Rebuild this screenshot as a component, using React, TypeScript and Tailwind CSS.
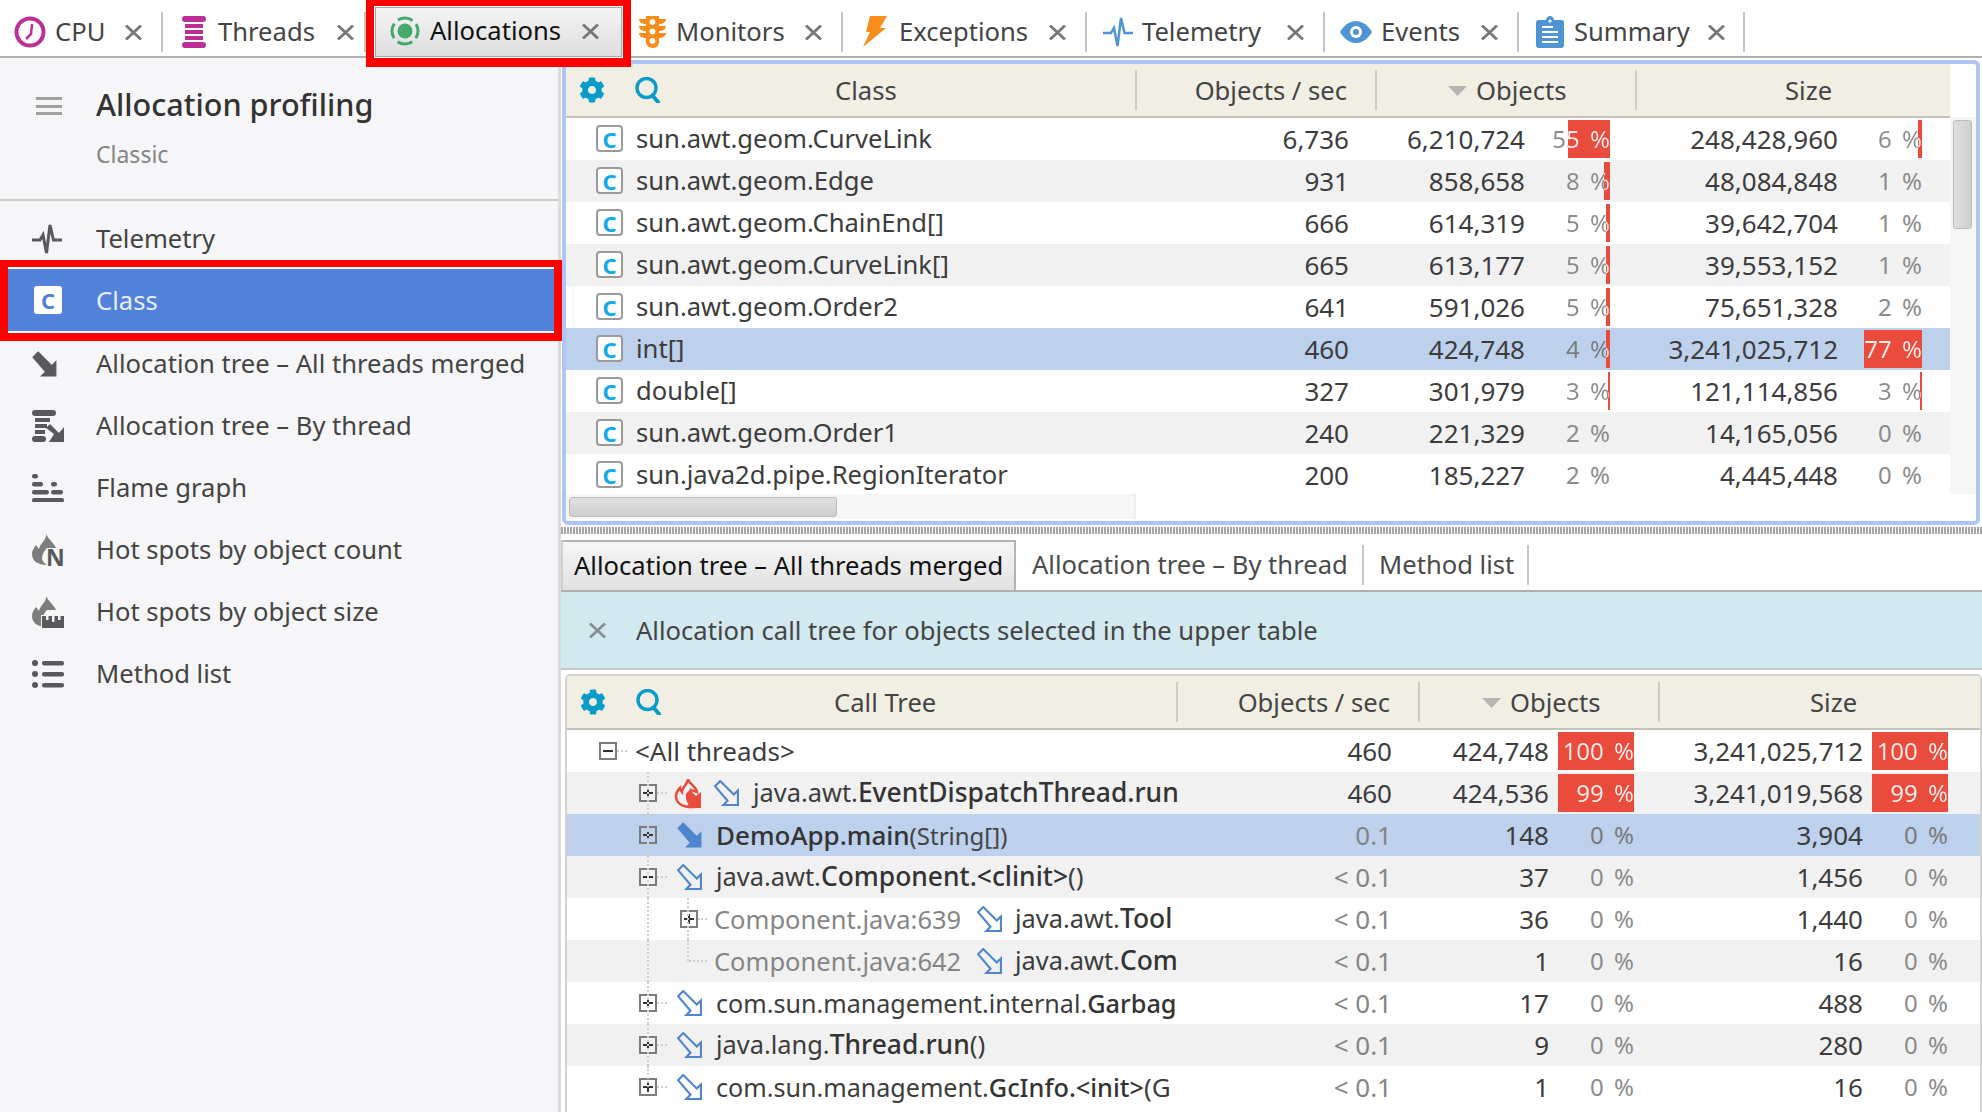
import { ReactNode } from 'react';
import { FaCog } from 'react-icons/fa';

const TEAL = '#0a9cc9';
const GREY = '#58595b';

function ClockIcon() {
  return (
    <svg width="32" height="32" viewBox="0 0 32 32" fill="none">
      <circle cx="16" cy="16" r="13.5" stroke="#bc2f97" strokeWidth="4" />
      <path d="M18 8 L17 18 L12 23" stroke="#bc2f97" strokeWidth="2.5" />
    </svg>
  );
}

function ThreadsIcon() {
  return (
    <svg width="24" height="32" viewBox="0 0 24 32" fill="#bc2f97">
      <rect x="0" y="0" width="24" height="6" rx="3" />
      <rect x="3" y="8" width="18" height="4" />
      <rect x="3" y="14" width="18" height="4" />
      <rect x="3" y="20" width="18" height="4" />
      <rect x="0" y="26" width="24" height="6" rx="3" />
    </svg>
  );
}

function AllocIcon() {
  return (
    <svg width="30" height="30" viewBox="0 0 30 30" fill="none">
      <circle cx="15" cy="15" r="7.5" fill="#46a86b" />
      <circle cx="15" cy="15" r="13" stroke="#46a86b" strokeWidth="3" strokeDasharray="15.4 5" strokeDashoffset="7.7" />
    </svg>
  );
}

function TrafficIcon() {
  return (
    <svg width="27" height="32" viewBox="0 0 27 32">
      <path
        fill="#f98d1a"
        fillRule="evenodd"
        d="M7 0h13v3h7c0 3-3 5-7 5v2h7c0 3-3 5-7 5v2h7c0 3-3 5-7 5v4c0 3-2 6-6 6s-7-3-7-6v-4c-4 0-7-2-7-5h7v-2c-4 0-7-2-7-5h7V8C3 8 0 6 0 3h7z M13.500 3a3 3 0 1 0 .01 0z M13.500 12.500a3 3 0 1 0 .01 0z M13.500 22a3 3 0 1 0 .01 0z"
      />
    </svg>
  );
}

function BoltIcon() {
  return (
    <svg width="24" height="32" viewBox="0 0 24 32">
      <path fill="#f98d1a" d="M7 0h17l-7 12h6L0 31l7-15H3z" />
    </svg>
  );
}

function PulseIcon({ color, width = 2.500 }: { color: string; width?: number }) {
  return (
    <svg width="30" height="30" viewBox="0 0 30 30" fill="none">
      <path d="M0 16h8l3-5 3.500 18L18 1l3.500 15H30" stroke={color} strokeWidth={width} />
    </svg>
  );
}

function EyeIcon() {
  return (
    <svg width="32" height="24" viewBox="0 0 32 24">
      <path fill="#4f94d4" d="M16 1c7 0 12.500 5 16 11-3.500 6-9 11-16 11S3.500 18 0 12C3.500 6 9 1 16 1z" />
      <circle cx="16" cy="12" r="6" fill="#fff" />
      <circle cx="16" cy="12" r="3" fill="#4f94d4" />
    </svg>
  );
}

function ClipboardIcon() {
  return (
    <svg width="28" height="32" viewBox="0 0 28 32">
      <path fill="#4f94d4" d="M3 4h7c0-2 2-4 4-4s4 2 4 4h7c2 0 3 1 3 3v22c0 2-1 3-3 3H3c-2 0-3-1-3-3V7c0-2 1-3 3-3z" />
      <path stroke="#fff" strokeWidth="2" d="M6 11h11M6 16h16M6 21h16M6 26h16" />
      <circle cx="14" cy="5" r="1.500" fill="#fff" />
    </svg>
  );
}

function CloseX({ light }: { light?: boolean }) {
  return (
    <svg width="17" height="15" viewBox="0 0 17 15" fill="none">
      <path d="M1 .5 16 14.500M16 .5 1 14.500" stroke={light ? '#8a8f92' : '#777'} strokeWidth="2.800" />
    </svg>
  );
}

function Tab({ icon, label, className, iconBox, labelBox }: { icon: ReactNode; label: string; className: string; iconBox: string; labelBox: string }) {
  return (
    <div className={'flex h-[56px] shrink-0 items-center pt-[8px] ' + className}>
      <div className={'flex shrink-0 items-center ' + iconBox}>{icon}</div>
      <div className={'shrink-0 whitespace-nowrap text-[#444] ' + labelBox}>{label}</div>
      <CloseX />
      <div className="ml-auto h-[40px] w-[2px] bg-[#c4c4c4]" />
    </div>
  );
}

function TabBar() {
  return (
    <div className="flex h-[58px] shrink-0 border-b-2 border-[#b0b0b0] bg-white text-[25.600px]">
      <Tab icon={<ClockIcon />} label="CPU" className="w-[163px] pl-[14px]" iconBox="w-[41px]" labelBox="w-[70px]" />
      <Tab icon={<ThreadsIcon />} label="Threads" className="w-[203px] pl-[19px]" iconBox="w-[36px]" labelBox="w-[119px]" />
      <div className="relative z-10 h-[67px] w-[265px] shrink-0 border-x-[8px] border-t-[6px] border-b-[9px] border-[#f00]">
        <div className="h-full border border-white">
          <div className="flex h-full items-center border border-[#aaa] bg-gradient-to-b from-[#f4f4f4] to-[#dedede] pb-[2px] pl-[14px]">
            <div className="flex w-[40px] shrink-0 items-center"><AllocIcon /></div>
            <div className="w-[152px] shrink-0 whitespace-nowrap text-[#111]">Allocations</div>
            <CloseX />
          </div>
        </div>
      </div>
      <Tab icon={<TrafficIcon />} label="Monitors" className="w-[212px] pl-[8px]" iconBox="w-[37px]" labelBox="w-[129px]" />
      <Tab icon={<BoltIcon />} label="Exceptions" className="w-[244px] pl-[20px]" iconBox="w-[36px]" labelBox="w-[150px]" />
      <Tab icon={<PulseIcon color="#4f94d4" />} label="Telemetry" className="w-[238px] pl-[16px]" iconBox="w-[39px]" labelBox="w-[145px]" />
      <Tab icon={<EyeIcon />} label="Events" className="w-[194px] pl-[15px]" iconBox="w-[41px]" labelBox="w-[100px]" />
      <Tab icon={<ClipboardIcon />} label="Summary" className="w-[226px] pl-[17px]" iconBox="w-[38px]" labelBox="w-[134px]" />
    </div>
  );
}

function TreeArrow({ filled, color = '#4f85cc', size = 26 }: { filled?: boolean; color?: string; size?: number }) {
  return (
    <svg width={size} height={size} viewBox="0 0 25 25">
      <path
        d="M1 6 6 1 19 14l4-4v14H9l4-4z"
        fill={filled ? color : 'none'}
        stroke={color}
        strokeWidth={filled ? 1 : 2}
      />
    </svg>
  );
}

function SideThreadsIcon() {
  return (
    <svg width="32" height="32" viewBox="0 0 32 32" fill={GREY}>
      <rect x="0" y="0" width="24" height="6" rx="3" />
      <rect x="3" y="8" width="15" height="4" />
      <rect x="3" y="14" width="12" height="4" />
      <rect x="3" y="20" width="10" height="4" />
      <rect x="0" y="26" width="14" height="6" rx="3" />
      <path d="M18 14 14 18l8 6-5 8h15V17l-5 6z" />
    </svg>
  );
}

function FlameGraphIcon() {
  return (
    <svg width="32" height="28" viewBox="0 0 32 28" fill={GREY}>
      <rect x="0" y="0" width="6" height="4.500" rx="2.200" />
      <rect x="0" y="8" width="11" height="4.500" rx="2.200" />
      <rect x="19" y="8" width="6" height="4.500" rx="2.200" />
      <rect x="0" y="16" width="17" height="4.500" rx="2.200" />
      <rect x="19" y="16" width="12" height="4.500" rx="2.200" />
      <rect x="0" y="24" width="32" height="4.500" rx="2.200" />
    </svg>
  );
}

function HotSpotIcon({ kind }: { kind: 'count' | 'size' }) {
  return (
    <svg width="36" height="48" viewBox="0 -8 36 48">
      <path
        fill="#7d7d7d"
        d="M14 0c2 5 8 9 10 14h-9c-3 3-5 7-5 10 0 3 2 5 5 7C6 31 0 27 0 20c0-4 2-6 4-9l3 4c1-6 8-9 7-15z"
      />
      {kind === 'count' ? (
        <text x="14" y="32" fontSize="23" fontWeight="700" fill={GREY}>N</text>
      ) : (
        <g>
          <rect x="9" y="19" width="24" height="13" fill="#f6f6f9" />
          <rect x="10" y="20" width="22" height="12" fill={GREY} />
          <rect x="14" y="20" width="2.500" height="4" fill="#f6f6f9" />
          <rect x="20" y="20" width="2.500" height="6" fill="#f6f6f9" />
          <rect x="26" y="20" width="2.500" height="4" fill="#f6f6f9" />
        </g>
      )}
    </svg>
  );
}

function MethodListIcon() {
  return (
    <svg width="32" height="28" viewBox="0 0 32 28" fill={GREY}>
      <circle cx="3" cy="3" r="3" />
      <circle cx="3" cy="14" r="3" />
      <circle cx="3" cy="25" r="3" />
      <rect x="10" y="1" width="22" height="4.500" rx="2" />
      <rect x="10" y="12" width="22" height="4.500" rx="2" />
      <rect x="10" y="23" width="22" height="4.500" rx="2" />
    </svg>
  );
}

function SideRow({ icon, label }: { icon: ReactNode; label: string }) {
  return (
    <div className="flex h-[62px] items-center">
      <div className="flex w-[96px] shrink-0 justify-start pl-[32px]">{icon}</div>
      <span className="whitespace-nowrap text-[25.600px] text-[#444]">{label}</span>
    </div>
  );
}

function Sidebar() {
  return (
    <aside className="w-[561px] shrink-0 border-r-[3px] border-[#dcdcde] bg-[#f6f6f9]">
      <div className="flex h-[143px] border-b-2 border-[#cfcfcf]">
        <div className="ml-[36px] mt-[39px] flex h-[18px] w-[26px] flex-col justify-between">
          <div className="h-[3px] bg-[#a0a0a0]" />
          <div className="h-[3px] bg-[#a0a0a0]" />
          <div className="h-[3px] bg-[#a0a0a0]" />
        </div>
        <div className="ml-[34px]">
          <div className="mt-[23px] whitespace-nowrap text-[30.600px] font-medium leading-[46px] text-[#333]">Allocation profiling</div>
          <div className="mt-[10px] text-[23px] leading-[34px] text-[#858585]">Classic</div>
        </div>
      </div>
      <div className="pt-[7px]">
        <SideRow icon={<PulseIcon color={GREY} width={3} />} label="Telemetry" />
        <div className="relative z-10 -mt-[10px] -mb-[8px] h-[81px] w-[562px] border-x-[8px] border-t-[7px] border-b-[8px] border-[#f00]">
          <div className="flex h-full items-center border-y-2 border-white bg-[#5181d8]">
            <div className="flex w-[88px] shrink-0 pl-[26px]">
              <div className="flex h-[28px] w-[28px] items-center justify-center rounded-[3px] bg-white text-[22px] font-bold leading-none text-[#5181d8]">C</div>
            </div>
            <span className="pt-[2px] text-[25.600px] text-[#e6eefb]">Class</span>
          </div>
        </div>
        <SideRow icon={<TreeArrow filled color={GREY} />} label="Allocation tree – All threads merged" />
        <SideRow icon={<SideThreadsIcon />} label="Allocation tree – By thread" />
        <SideRow icon={<FlameGraphIcon />} label="Flame graph" />
        <SideRow icon={<HotSpotIcon kind="count" />} label="Hot spots by object count" />
        <SideRow icon={<HotSpotIcon kind="size" />} label="Hot spots by object size" />
        <SideRow icon={<MethodListIcon />} label="Method list" />
      </div>
    </aside>
  );
}

function SearchIcon() {
  return (
    <svg width="26" height="26" viewBox="0 0 26 26" fill="none">
      <circle cx="11.500" cy="11" r="9.500" stroke={TEAL} strokeWidth="3.400" />
      <path d="M17.500 18.500 23 25" stroke={TEAL} strokeWidth="4" strokeLinecap="round" />
    </svg>
  );
}

function SortArrow() {
  return (
    <svg width="19" height="10" viewBox="0 0 19 10">
      <path d="M0 0h19l-9.500 10z" fill="#b5b5b5" />
    </svg>
  );
}

function HeaderTools() {
  return (
    <div className="ml-[13px] flex shrink-0 items-center gap-[30px]">
      <FaCog size={26} color={TEAL} />
      <SearchIcon />
    </div>
  );
}

function Sep() {
  return <div className="h-[40px] w-[2px] shrink-0 bg-[#cfcdc4]" />;
}

// the part of the text over the bar turns white, the rest stays grey
function Percent({ value, bar, selected }: { value: string; bar?: number; selected?: boolean }) {
  const grey = selected ? '#7a7a7a' : '#8b8b8b';
  return (
    <div className="relative flex h-full items-center justify-end">
      {bar ? <div className="absolute top-[2px] right-0 bottom-[2px] bg-[#e94b3c]" style={{ width: bar }} /> : null}
      <span
        className="relative whitespace-nowrap pb-[1px] text-[24px] text-[#8b8b8b] [word-spacing:4px]"
        style={
          bar
            ? {
                backgroundImage: `linear-gradient(to left, #ffeeeb ${bar}px, ${grey} ${bar}px)`,
                WebkitBackgroundClip: 'text',
                backgroundClip: 'text',
                color: 'transparent',
              }
            : { color: grey }
        }
      >
        {value}
      </span>
    </div>
  );
}

const classRows: [string, string, string, string, number, string, string, number][] = [
  ['sun.awt.geom.CurveLink', '6,736', '6,210,724', '55 %', 42, '248,428,960', '6 %', 4],
  ['sun.awt.geom.Edge', '931', '858,658', '8 %', 6, '48,084,848', '1 %', 0],
  ['sun.awt.geom.ChainEnd[]', '666', '614,319', '5 %', 4, '39,642,704', '1 %', 0],
  ['sun.awt.geom.CurveLink[]', '665', '613,177', '5 %', 4, '39,553,152', '1 %', 0],
  ['sun.awt.geom.Order2', '641', '591,026', '5 %', 4, '75,651,328', '2 %', 0],
  ['int[]', '460', '424,748', '4 %', 4, '3,241,025,712', '77 %', 58],
  ['double[]', '327', '301,979', '3 %', 2, '121,114,856', '3 %', 2],
  ['sun.awt.geom.Order1', '240', '221,329', '2 %', 0, '14,165,056', '0 %', 0],
  ['sun.java2d.pipe.RegionIterator', '200', '185,227', '2 %', 0, '4,445,448', '0 %', 0],
];

function ClassBadge() {
  return (
    <div className="flex h-[27px] w-[27px] items-center justify-center rounded-[4px] border-2 border-[#9a9a9a] bg-white text-[22px] font-bold leading-none text-[#11a9ed]">
      C
    </div>
  );
}

function UpperTable() {
  return (
    <div className="ml-px mr-[2px] mt-[2px] flex h-[465px] shrink-0 overflow-hidden rounded-[6px] border-4 border-[#afc6f5] bg-white">
      <div className="w-[1384px] shrink-0">
        <div className="flex h-[54px] items-center border-b-2 border-[#c2c1ba] bg-[#f1efe4] text-[25.600px] text-[#444]">
          <HeaderTools />
          <div className="ml-[174px] w-[300px] shrink-0 pt-[2px]">Class</div>
          <Sep />
          <div className="flex w-[238px] shrink-0 justify-end pr-[28px] pt-[2px]">Objects / sec</div>
          <Sep />
          <div className="flex w-[258px] shrink-0 items-center gap-[9px] pl-[71px] pt-[2px]"><SortArrow />Objects</div>
          <Sep />
          <div className="pl-[148px] pt-[2px]">Size</div>
        </div>
        <div className="h-[376px] overflow-hidden">
          {classRows.map((r, i) => (
            <div
              key={r[0]}
              className={
                'grid h-[42px] grid-cols-[570px_213px_176px_85px_228px_84px_28px] items-center text-[26px] text-[#3c3c3c] ' +
                (i === 5 ? 'bg-[#bdd0ec]' : i % 2 === 1 ? 'bg-[#f1f1f1]' : 'bg-white')
              }
            >
              <div className="flex items-center pl-[30px]">
                <ClassBadge />
                <span className="ml-[13px] whitespace-nowrap text-[25.600px]">{r[0]}</span>
              </div>
              <div className="text-right">{r[1]}</div>
              <div className="text-right">{r[2]}</div>
              <Percent value={r[3]} bar={r[4]} selected={i === 5} />
              <div className="text-right">{r[5]}</div>
              <Percent value={r[6]} bar={r[7]} selected={i === 5} />
              <div />
            </div>
          ))}
        </div>
        <div className="flex h-[25px] w-[570px] items-center border-r-2 border-[#eee] bg-[#f6f6f6] pl-[3px]">
          <div className="h-[20px] w-[268px] rounded-[3px] border border-[#bbb] bg-gradient-to-b from-[#e0e0e0] to-[#cfcfcf]" />
        </div>
      </div>
      <div className="mt-[53px] h-[377px] w-[26px] bg-[#f6f6f6] px-[3px] pt-[3px]">
        <div className="h-[109px] w-[19px] rounded-[3px] border border-[#bbb] bg-gradient-to-r from-[#e0e0e0] to-[#cfcfcf]" />
      </div>
    </div>
  );
}

function SubTabs() {
  return (
    <div className="flex h-[58px] shrink-0 items-center border-b-2 border-[#b0b0b0] bg-white pt-[6px] text-[25.600px] text-[#4a4a4a]">
      <div className="flex h-[50px] w-[455px] shrink-0 items-center self-end whitespace-nowrap border-x-2 border-t-2 border-[#b4b4b4] border-l-[#d0d0d0] bg-gradient-to-b from-[#f6f6f6] to-[#e1e1e1] pl-[11px] text-[#111]">
        Allocation tree – All threads merged
      </div>
      <div className="ml-[16px] w-[330px] shrink-0 whitespace-nowrap">Allocation tree – By thread</div>
      <div className="h-[40px] w-[2px] shrink-0 bg-[#c8c8c8]" />
      <div className="ml-[15px] w-[148px] shrink-0 whitespace-nowrap">Method list</div>
      <div className="h-[40px] w-[2px] shrink-0 bg-[#c8c8c8]" />
    </div>
  );
}

function ExpandBox({ open }: { open?: boolean }) {
  return (
    <svg width="18" height="18" viewBox="0 0 18 18" className="shrink-0">
      <rect x="1" y="1" width="16" height="16" fill="none" stroke="#7c7c7c" strokeWidth="2" />
      <path d={open ? 'M4 9h10' : 'M4 9h10M9 4v10'} stroke="#333" strokeWidth="2" />
    </svg>
  );
}

function FlameArrowIcon() {
  return (
    <svg width="28" height="32" viewBox="0 0 28 32" className="shrink-0">
      <path
        fill="none"
        stroke="#e94b3c"
        strokeWidth="2.500"
        d="M14 2c0 4 8 7 9 13-2-1-4-1-6-2 0 2-3 3-4 5 0 3 1 8 5 12C8 30 2 26 2 19c0-4 2-6 4-8 0 2 1 3 2 4 0-5 6-8 6-13z"
      />
      <path fill="#e94b3c" d="M12 17l4-4 6 6 5-4v16H12l4-5z" />
    </svg>
  );
}

function VGuide({ className }: { className: string }) {
  return <div className={'absolute w-0 border-l-2 border-dotted border-[#cfcfcf] ' + className} />;
}

function HGuide({ className }: { className: string }) {
  return <div className={'absolute top-[20px] h-0 border-t-2 border-dotted border-[#cfcfcf] ' + className} />;
}

function Pkg({ a, b, c, tight }: { a: string; b: string; c?: string; tight?: boolean }) {
  return (
    <span className="whitespace-nowrap">
      <span className={tight ? 'text-[25.100px]' : 'text-[25.400px]'}>{a}</span>
      <span className={'font-medium text-[#333] ' + (tight ? 'text-[25.300px]' : 'text-[26.400px]')}>{b}</span>
      {c}
    </span>
  );
}

const Arrow = () => <div className="ml-[20px] mr-[13px] shrink-0"><TreeArrow /></div>;

const treeRows: { cell: ReactNode; v: string[]; bars?: [number, number] }[] = [
  {
    cell: (
      <div className="flex h-full items-center pl-[32px]">
        <HGuide className="left-[50px] w-[10px]" />
        <ExpandBox open />
        <span className="ml-[18px] whitespace-nowrap">&lt;All threads&gt;</span>
      </div>
    ),
    v: ['460', '424,748', '100 %', '3,241,025,712', '100 %'],
    bars: [76, 76],
  },
  {
    cell: (
      <div className="flex h-full items-center pl-[72px]">
        <VGuide className="top-0 bottom-0 left-[80px]" />
        <HGuide className="left-[90px] w-[10px]" />
        <ExpandBox />
        <div className="ml-[17px]"><FlameArrowIcon /></div>
        <div className="ml-[12px] mr-[13px] shrink-0"><TreeArrow /></div>
        <Pkg a="java.awt." b="EventDispatchThread.run" />
      </div>
    ),
    v: ['460', '424,536', '99 %', '3,241,019,568', '99 %'],
    bars: [76, 76],
  },
  {
    cell: (
      <div className="flex h-full items-center pl-[72px]">
        <VGuide className="top-0 bottom-0 left-[80px]" />
        <HGuide className="left-[90px] w-[10px]" />
        <ExpandBox />
        <div className="ml-[20px] mr-[13px] shrink-0"><TreeArrow filled /></div>
        <span className="whitespace-nowrap font-medium text-[#333]">
          DemoApp.main<span className="text-[24px] font-normal text-[#444]">(String[])</span>
        </span>
      </div>
    ),
    v: ['0.1', '148', '0 %', '3,904', '0 %'],
  },
  {
    cell: (
      <div className="flex h-full items-center pl-[72px]">
        <VGuide className="top-0 bottom-0 left-[80px]" />
        <HGuide className="left-[90px] w-[10px]" />
        <ExpandBox open />
        <Arrow />
        <Pkg a="java.awt." b="Component.<clinit>" c="()" />
      </div>
    ),
    v: ['< 0.1', '37', '0 %', '1,456', '0 %'],
  },
  {
    cell: (
      <div className="flex h-full items-center pl-[113px]">
        <VGuide className="top-0 bottom-0 left-[80px]" />
        <VGuide className="top-0 bottom-0 left-[120px]" />
        <HGuide className="left-[131px] w-[9px]" />
        <ExpandBox />
        <span className="ml-[16px] w-[263px] shrink-0 whitespace-nowrap text-[25.500px] text-[#858585]">Component.java:639</span>
        <div className="mr-[12px] shrink-0"><TreeArrow /></div>
        <Pkg a="java.awt." b="Tool" />
      </div>
    ),
    v: ['< 0.1', '36', '0 %', '1,440', '0 %'],
  },
  {
    cell: (
      <div className="flex h-full items-center pl-[147px]">
        <VGuide className="top-0 bottom-0 left-[80px]" />
        <VGuide className="top-0 h-[21px] left-[120px]" />
        <HGuide className="left-[122px] w-[18px]" />
        <span className="w-[263px] shrink-0 whitespace-nowrap text-[25.500px] text-[#858585]">Component.java:642</span>
        <div className="mr-[12px] shrink-0"><TreeArrow /></div>
        <Pkg a="java.awt." b="Com" />
      </div>
    ),
    v: ['< 0.1', '1', '0 %', '16', '0 %'],
  },
  {
    cell: (
      <div className="flex h-full items-center pl-[72px]">
        <VGuide className="top-0 bottom-0 left-[80px]" />
        <HGuide className="left-[90px] w-[10px]" />
        <ExpandBox />
        <Arrow />
        <Pkg tight a="com.sun.management.internal." b="Garbag" />
      </div>
    ),
    v: ['< 0.1', '17', '0 %', '488', '0 %'],
  },
  {
    cell: (
      <div className="flex h-full items-center pl-[72px]">
        <VGuide className="top-0 bottom-0 left-[80px]" />
        <HGuide className="left-[90px] w-[10px]" />
        <ExpandBox />
        <Arrow />
        <Pkg a="java.lang." b="Thread.run" c="()" />
      </div>
    ),
    v: ['< 0.1', '9', '0 %', '280', '0 %'],
  },
  {
    cell: (
      <div className="flex h-full items-center pl-[72px]">
        <VGuide className="top-0 h-[21px] left-[80px]" />
        <HGuide className="left-[90px] w-[10px]" />
        <ExpandBox />
        <Arrow />
        <Pkg tight a="com.sun.management." b="GcInfo.<init>" c="(G" />
      </div>
    ),
    v: ['< 0.1', '1', '0 %', '16', '0 %'],
  },
];

function LowerTable() {
  return (
    <div className="ml-[4px] mt-[4px] flex-1 overflow-hidden rounded-t-[5px] border-x-2 border-t-2 border-[#d2d2d2] bg-white">
      <div className="flex h-[54px] items-center border-b-2 border-[#c2c1ba] bg-[#f1efe4] text-[25.600px] text-[#444]">
        <HeaderTools />
        <div className="ml-[172px] w-[342px] shrink-0 whitespace-nowrap pt-[3px]">Call Tree</div>
        <Sep />
        <div className="flex w-[240px] shrink-0 justify-end pr-[28px] pt-[3px]">Objects / sec</div>
        <Sep />
        <div className="flex w-[238px] shrink-0 items-center gap-[9px] pl-[62px] pt-[3px]"><SortArrow />Objects</div>
        <Sep />
        <div className="pl-[150px] pt-[3px]">Size</div>
      </div>
      {treeRows.map((r, i) => (
        <div
          key={i}
          className={
            'grid h-[42px] grid-cols-[613px_212px_157px_85px_229px_85px_28px] items-center text-[26px] text-[#3c3c3c] ' +
            (i === 2 ? 'bg-[#bdd0ec]' : i % 2 === 1 ? 'bg-[#f1f1f1]' : 'bg-white')
          }
        >
          <div className="relative h-full overflow-hidden">{r.cell}</div>
          <div className={'text-right ' + (r.v[0].includes('.') ? 'text-[#858585]' : '')}>{r.v[0]}</div>
          <div className="text-right">{r.v[1]}</div>
          <Percent value={r.v[2]} bar={r.bars?.[0]} selected={i === 2} />
          <div className="text-right">{r.v[3]}</div>
          <Percent value={r.v[4]} bar={r.bars?.[1]} selected={i === 2} />
          <div />
        </div>
      ))}
    </div>
  );
}

export default function App() {
  return (
    <div className="flex h-[1112px] w-[1982px] flex-col overflow-hidden bg-white font-['Noto_Sans','DejaVu_Sans',sans-serif]">
      <TabBar />
      <div className="flex min-h-0 flex-1">
        <Sidebar />
        <main className="flex min-w-0 flex-1 flex-col">
          <UpperTable />
          <div className="mt-[2px] h-[7px] shrink-0 bg-[repeating-linear-gradient(90deg,#a6a6a6_0,#a6a6a6_2px,#ffffff_2px,#ffffff_3px)]" />
          <SubTabs />
          <div className="flex h-[78px] shrink-0 items-center border-b-2 border-[#c8c8c8] bg-[#d3e9f0] text-[25.600px] text-[#444]">
            <div className="ml-[28px] mr-[30px]"><CloseX light /></div>
            <span className="pt-[3px]">Allocation call tree for objects selected in the upper table</span>
          </div>
          <LowerTable />
        </main>
      </div>
    </div>
  );
}
